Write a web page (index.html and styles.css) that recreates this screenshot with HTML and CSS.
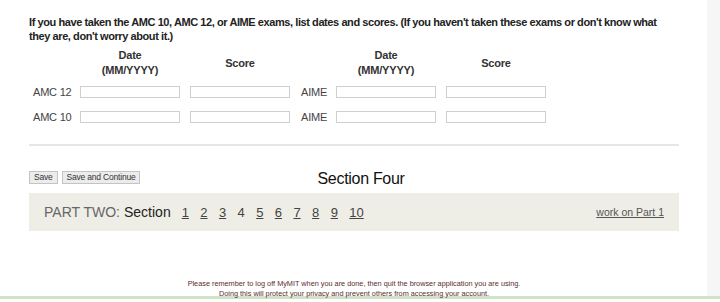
FILE: index.html
```html
<!DOCTYPE html>
<html>
<head>
    <title>Section Four</title>
    <link rel="stylesheet" href="styles.css">
</head>
<body>
    <div class="layout">
        <div class="main">
            <p class="intro">If you have taken the AMC 10, AMC 12, or AIME exams, list dates and scores. (If you haven't taken these exams or don't know what they are, don't worry about it.)</p>

            <div class="exam-grid">
                <div></div>
                <div class="col-head">Date<br>(MM/YYYY)</div>
                <div class="col-head">Score</div>
                <div></div>
                <div class="col-head">Date<br>(MM/YYYY)</div>
                <div class="col-head">Score</div>

                <label class="row-label">AMC 12</label>
                <input type="text" class="field">
                <input type="text" class="field">
                <label class="row-label aime">AIME</label>
                <input type="text" class="field">
                <input type="text" class="field">

                <label class="row-label">AMC 10</label>
                <input type="text" class="field">
                <input type="text" class="field">
                <label class="row-label aime">AIME</label>
                <input type="text" class="field">
                <input type="text" class="field">
            </div>

            <hr class="divider">

            <div class="action-row">
                <div class="buttons">
                    <button type="button">Save</button>
                    <button type="button">Save and Continue</button>
                </div>
                <h2 class="section-title">Section Four</h2>
            </div>

            <div class="part-nav">
                <div class="sections">
                    <span class="part-name">PART TWO:</span>
                    <span class="part-label">Section</span>
                    <a href="#">1</a>
                    <a href="#">2</a>
                    <a href="#">3</a>
                    <span class="current">4</span>
                    <a href="#">5</a>
                    <a href="#">6</a>
                    <a href="#">7</a>
                    <a href="#">8</a>
                    <a href="#">9</a>
                    <a href="#">10</a>
                </div>
                <a href="#" class="other-part">work on Part 1</a>
            </div>

            <div class="footer">
                Please remember to log off MyMIT when you are done, then quit the browser application you are using.<br>
                Doing this will protect your privacy and prevent others from accessing your account.
            </div>
        </div>
        <div class="rail"></div>
    </div>
</body>
</html>
```

FILE: styles.css
```css
body {
    margin: 0;
    font-family: "Liberation Sans", Arial, sans-serif;
    color: #222;
    background: #fff;
}

.layout {
    display: flex;
    height: 296px;
    border-bottom: 3px solid #d3e3c8;
}

.main {
    width: 707px;
    padding-left: 29px;
    box-sizing: border-box;
}

.rail {
    flex: 1;
    background-color: #f6f6f6;
}

.intro {
    width: 650px;
    margin: 15px 0 0;
    font-size: 11px;
    font-weight: bold;
    letter-spacing: -0.42px;
    line-height: 14px;
    color: #222;
}

.exam-grid {
    display: grid;
    grid-template-columns: 51px 110px 111px 35px 110px 110px;
    grid-template-rows: 32px 25px 25px;
    align-items: center;
    margin-top: 4px;
}

.col-head {
    width: 100px;
    text-align: center;
    font-size: 11px;
    font-weight: bold;
    letter-spacing: -0.2px;
    line-height: 15px;
    color: #333;
}

.row-label {
    padding-left: 4px;
    font-size: 11px;
    letter-spacing: -0.2px;
    color: #444;
}

.row-label.aime {
    padding-left: 0;
}

.field {
    width: 100px;
    height: 12px;
    padding: 0;
    box-sizing: border-box;
    border: 1px solid #cfcfcf;
    background: #fff;
}

.divider {
    width: 650px;
    margin: 15px 0 0;
    border: 0;
    border-top: 2px solid #e6e6e6;
}

.action-row {
    display: flex;
    width: 650px;
    height: 20px;
    margin-top: 23px;
}

.buttons {
    display: flex;
    gap: 4px;
    margin-top: 2px;
}

button {
    height: 13px;
    padding: 0 4px;
    font-family: "Liberation Sans", Arial, sans-serif;
    font-size: 8.5px;
    letter-spacing: -0.2px;
    line-height: 11px;
    color: #333;
    background-color: #ececec;
    border: 1px solid #c4c4c4;
}

.section-title {
    margin: 0 0 0 177px;
    font-size: 16px;
    font-weight: normal;
    letter-spacing: -0.3px;
    line-height: 20px;
    color: #111;
}

.part-nav {
    display: flex;
    justify-content: space-between;
    align-items: center;
    width: 650px;
    height: 38px;
    margin-top: 4px;
    padding: 0 15px;
    box-sizing: border-box;
    background-color: #eeeee6;
}

.sections {
    display: flex;
    align-items: baseline;
    font-size: 13px;
}

.part-name {
    font-size: 14px;
    color: #666;
}

.part-label {
    margin-left: 4px;
    margin-right: 11px;
    font-size: 14px;
    color: #222;
}

.sections a,
.sections .current {
    margin-right: 11.4px;
    color: #444;
}

.other-part {
    font-size: 10.5px;
    color: #555;
}

.footer {
    width: 650px;
    margin-top: 48px;
    font-size: 7.3px;
    line-height: 10px;
    text-align: center;
    color: #5a2d2d;
}
```
